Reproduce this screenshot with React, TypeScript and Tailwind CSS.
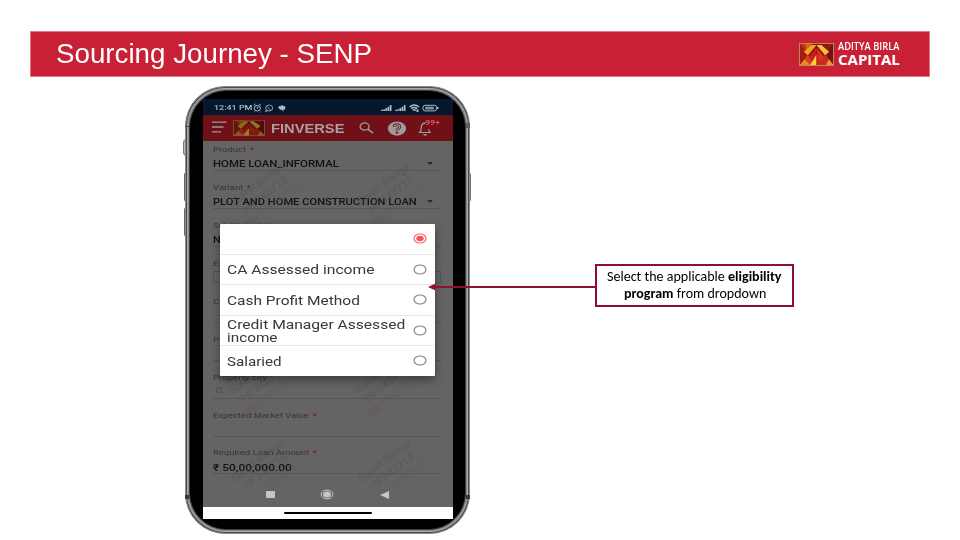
import { useLayoutEffect, useRef, useState } from "react";
import type { ReactNode } from "react";

const UI = "font-['Roboto',sans-serif]";

/* Stretches a single line of text horizontally to a given width. */
function Fit({ w, className = "", children }: { w: number; className?: string; children: ReactNode }) {
  const ref = useRef<HTMLSpanElement>(null);
  const [scale, setScale] = useState(1);
  useLayoutEffect(() => {
    if (ref.current) setScale(w / ref.current.offsetWidth);
  }, [w]);
  return (
    <span className="flex shrink-0 items-start" style={{ width: w }}>
      <span
        ref={ref}
        className={`block shrink-0 origin-left whitespace-nowrap ${className}`}
        style={{ transform: `scaleX(${scale})` }}
      >
        {children}
      </span>
    </span>
  );
}

function Emblem({ className }: { className: string }) {
  return (
    <svg viewBox="0 0 36 24" preserveAspectRatio="none" className={className}>
      <rect width="36" height="24" fill="#8e1714" />
      <path d="M0 0H16L9 11Z" fill="#b93a18" />
      <path d="M6 0H13L9 11Z" fill="#d9601d" />
      <path d="M20 0H36L27 11Z" fill="#8f1a14" />
      <path d="M0 0 9 11 0 23Z" fill="#a01f15" />
      <path d="M36 0 27 11 36 23Z" fill="#7a1010" />
      <path d="M13 0H23L18 6Z" fill="#7a1010" />
      <path d="M18 2 9 13 5 9 13 2Z" fill="#f3a324" />
      <path d="M18 2 27 13 31 9 23 2Z" fill="#f8bd36" />
      <path d="M0 24 9 12 18 24Z" fill="#d8401b" />
      <path d="M0 24 6 17 12 24Z" fill="#e98a24" />
      <path d="M36 24 27 12 18 24Z" fill="#c2301a" />
      <path d="M36 24 31 17 27 24Z" fill="#f0952a" />
      <path d="M18 5 10 15 16 22Z" fill="#c9201c" />
      <path d="M18 5 26 15 20 22Z" fill="#e0301c" />
      <path d="M18 12 11 24H18Z" fill="#fbd23e" />
      <path d="M18 12 24 24H18Z" fill="#c92a1b" />
      <rect x=".5" y=".5" width="35" height="23" fill="none" stroke="#c28a55" strokeWidth="1" />
    </svg>
  );
}

function Header() {
  return (
    <header className="ml-[30px] flex h-[46px] w-[900px] items-center justify-between border border-[#e0798a] bg-[#c82034] pl-[25px] pr-[29px]">
      <h1 className="font-['Liberation_Sans',sans-serif] text-white">
        <Fit w={316} className="text-[28px] leading-[34px]">Sourcing Journey - SENP</Fit>
      </h1>
      <div className="flex items-center gap-[4px] text-white">
        <Emblem className="h-[23px] w-[35px]" />
        <div className="pb-[2px] font-['Open_Sans',sans-serif]">
          <Fit w={61} className="text-[11px] font-semibold leading-[12px]">ADITYA BIRLA</Fit>
          <Fit w={62} className="text-[15px] font-bold leading-[14px]">CAPITAL</Fit>
        </div>
      </div>
    </header>
  );
}

function StatusBar() {
  return (
    <div className="flex h-[16px] shrink-0 items-center bg-[#03182d] pl-[11px] pr-[14px] pt-px text-[#b4bac0]">
      <Fit w={38} className={`${UI} text-[8px] font-medium leading-[10px]`}>12:41 PM</Fit>
      <svg viewBox="0 0 34 10" className="h-[10px] w-[34px]" fill="none" stroke="currentColor">
        <ellipse cx="5.3" cy="5.2" rx="3.1" ry="2.8" />
        <path d="M1.5 2.3 3.5 1M9 2.3 7 1M5.3 3.6v1.8l1.3-.8M2.8 8.5 2 9.2M7.8 8.5l.8.7" strokeWidth=".9" />
        <ellipse cx="17.2" cy="5" rx="3.5" ry="3" strokeWidth=".8" />
        <path d="m14.2 7-.8 1.5 2-.5M15.800 3.700c.3 1.500 1.200 2.300 2.800 2.700" strokeWidth=".8" />
        <path d="M27 3.200h2l1-1.200 1 1.200h2v3h-2L31.500 8 29.500 6.500H28L26.500 4.800Z" fill="currentColor" strokeWidth=".4" />
      </svg>
      <svg viewBox="0 0 58 10" className="ml-auto h-[10px] w-[58px]" fill="currentColor">
        <path d="M0 6.800h1.700V8H0zM2.200 6.300h1.700V8H2.200zM4.400 5h1.700v3H4.400zM6.600 3.700h1.700V8H6.600zM8.800 2h1.700v6H8.800z" />
        <path d="M14 6.800h1.700V8H14zM16.200 6.300h1.700V8h-1.700zM18.400 5h1.700v3h-1.700zM20.600 3.700h1.700V8h-1.700zM22.800 2h1.700v6h-1.700z" />
        <g fill="none" stroke="currentColor" strokeWidth="1.500">
          <path d="M28.500 4c3-2.400 6.500-2.400 9.500 0M30.200 5.700c2-1.500 4-1.500 6 0M31.800 7.300c1-.7 2-.7 3 0" />
        </g>
        <path d="M35.500 6.500h2V9h-2z" />
        <rect x="42" y="2.300" width="13.500" height="5.600" rx="2" fill="none" stroke="currentColor" />
        <rect x="44" y="3.700" width="9" height="2.800" rx="1" opacity=".75" />
        <rect x="56" y="4" width="1.500" height="2" />
      </svg>
    </div>
  );
}

function AppBar() {
  return (
    <div className="flex h-[26px] shrink-0 items-center bg-[#6f1117] pl-[9px] pr-[11px] text-[#a09a9a]">
      <svg viewBox="0 0 15 12" className="mb-[2px] h-[12px] w-[15px]" fill="none" stroke="currentColor" strokeWidth="1.300">
        <path d="M0 1.200h14.500M0 6h11.500M0 10.800h9" />
      </svg>
      <div className="ml-[6px] h-[16px] w-[32px] brightness-[.62]">
        <Emblem className="h-full w-full" />
      </div>
      <div className="ml-[6px] pt-[2px] text-[#a8a2a3]">
        <Fit w={74} className="font-['Liberation_Sans',sans-serif] text-[12.500px] font-bold leading-[16px]">
          FINVERSE
        </Fit>
      </div>
      <svg viewBox="0 0 15 12" className="ml-[14px] h-[12px] w-[15px]" fill="none" stroke="currentColor" strokeWidth="1.300">
        <ellipse cx="5.600" cy="4.500" rx="4.500" ry="3.700" />
        <path d="m9 7.200 5 4" strokeWidth="1.600" />
      </svg>
      <svg viewBox="0 0 20 16" className="ml-[13px] h-[15px] w-[20px]">
        <ellipse cx="10" cy="8" rx="9.700" ry="7.600" fill="#a09a9b" />
        <path d="M6.800 6.200C7 3.200 13 3.200 13 6.200c0 1.800-3 1.800-3 3.800" fill="none" stroke="#751a1f" strokeWidth="3" />
        <path d="M6.800 6.200C7 3.200 13 3.200 13 6.200c0 1.800-3 1.800-3 3.800" fill="none" stroke="#a09a9b" strokeWidth="1.200" />
        <ellipse cx="10" cy="12.400" rx="1.500" ry="1.100" fill="#751a1f" />
      </svg>
      <div className="relative ml-[10px] h-[16px] w-[17px]">
        <svg viewBox="0 0 16 16" className="h-full w-full" fill="none" stroke="currentColor" strokeWidth="1.200">
          <path d="M1 12.500h12.500M2.500 12.300C4 10.500 3.600 8 4 6c.5-2 2-3 4-3.200M12.500 12.300c-1.200-1-1.200-2.500-1.300-4M6 14.300c1 .9 2.200.9 3.200 0" />
        </svg>
        <div className="absolute -top-[2px] left-[9px] h-[12px] w-[12px] rounded-full bg-[#82070f]" />
        <div className="absolute -top-px left-[8px]">
          <Fit w={14.5} className={`${UI} text-[7.500px] italic leading-[8px] text-[#bd9597]`}>99+</Fit>
        </div>
      </div>
    </div>
  );
}

type FieldData = { label: string; w: number; req?: boolean; value?: string; vw?: number; select?: boolean; search?: boolean; box?: boolean };

const fields: FieldData[] = [
  { label: "Product", w: 33, req: true, value: "HOME LOAN_INFORMAL", vw: 126, select: true },
  { label: "Variant", w: 30, req: true, value: "PLOT AND HOME CONSTRUCTION LOAN", vw: 204, select: true },
  { label: "Sub Variant", w: 48, req: true, value: "NA", vw: 15 },
  { label: "Eligibility Program", w: 80, req: true, box: true },
  { label: "Construction Type", w: 80 },
  { label: "Property Type", w: 60 },
  { label: "Property city", w: 54, search: true },
  { label: "Expected Market Value", w: 96, req: true },
  { label: "Required Loan Amount", w: 96, req: true, value: "₹ 50,00,000.00", vw: 79 },
];

function Field({ f }: { f: FieldData }) {
  return (
    <div className={`flex h-[37.950px] shrink-0 flex-col justify-end border-b ${f.box ? "border-transparent" : "border-[#565656]"}`}>
      <div className="flex h-[14px] items-center gap-[4px]">
        <Fit w={f.w} className={`${UI} text-[8px] leading-[10px] text-[#353535]`}>{f.label}</Fit>
        {f.req && <span className={`${UI} text-[8px] font-bold leading-[10px] text-[#8b1519]`}>*</span>}
      </div>
      {f.box ? (
        <div className="mb-px h-[12px] border border-[#41566d]" />
      ) : (
        <div className="flex h-[13px] items-center justify-between pt-px">
          {f.value && <Fit w={f.vw ?? 0} className={`${UI} text-[9.500px] font-medium leading-[11px] text-[#121212]`}>{f.value}</Fit>}
          {f.select && <span className="mr-[8px] h-0 w-0 border-x-[3px] border-t-[3px] border-x-transparent border-t-[#292929]" />}
          {f.search && (
            <svg viewBox="0 0 10 9" className="mb-[2px] ml-[2px] h-[8px] w-[10px]" fill="none" stroke="#4a4a4a">
              <ellipse cx="4" cy="3.500" rx="3.300" ry="2.700" />
              <path d="m6.500 5.500 3 2.500" />
            </svg>
          )}
        </div>
      )}
    </div>
  );
}

const marks = [
  "left-[29px] top-[76px]",
  "left-[155px] top-[76px]",
  "left-[27px] top-[265px]",
  "left-[151px] top-[265px]",
  "left-[29px] top-[353px]",
  "left-[156px] top-[353px]",
];

function Watermarks() {
  return (
    <div className="pointer-events-none absolute left-0 top-0 h-[386px] w-full overflow-hidden">
      {marks.map((m) => (
        <div
          key={m}
          className={`absolute ${m} ${UI} flex w-[66px] -rotate-[37deg] flex-col items-center text-[10.500px] leading-[13px] text-[#474e5a]/45`}
        >
          <Fit w={62}>Sumit Banga</Fit>
          <Fit w={53}>HF343718</Fit>
          <div className="flex items-center gap-1 text-[#6b5350]/35">
            <span className="h-[8px] w-[14px] bg-[#6b4a46]/15" />
            <Fit w={50}>FINVERSE</Fit>
          </div>
        </div>
      ))}
    </div>
  );
}

function Radio({ on }: { on?: boolean }) {
  return (
    <svg viewBox="0 0 14 11" className="h-[11px] w-[14px] shrink-0" fill="none">
      <ellipse cx="7" cy="5.500" rx="6" ry="4.500" stroke={on ? "#f4666b" : "#858585"} strokeWidth="1.200" />
      {on && <ellipse cx="7" cy="5.500" rx="3.700" ry="2.800" fill="#f4555c" />}
    </svg>
  );
}

const options: { lines: [string, number][]; on?: boolean }[] = [
  { lines: [], on: true },
  { lines: [["CA Assessed income", 147]] },
  { lines: [["Cash Profit Method", 133]] },
  { lines: [["Credit Manager Assessed", 178], ["income", 51]] },
  { lines: [["Salaried", 55]] },
];

function OptionsModal() {
  return (
    <div className="absolute left-[16.500px] top-[125px] flex h-[151.500px] w-[215.500px] flex-col divide-y divide-[#e9e9e9] rounded-[1px] bg-white shadow-[0_4px_10px_rgba(0,0,0,.4)]">
      {options.map((o, i) => (
        <div key={i} className="flex min-h-0 flex-1 items-center justify-between pl-[7.500px] pr-[8px]">
          <div className="pt-px">
            {o.lines.map(([t, w]) => (
              <Fit key={t} w={w} className={`${UI} text-[13.500px] leading-[13px] text-[#383838]`}>{t}</Fit>
            ))}
          </div>
          <Radio on={o.on} />
        </div>
      ))}
    </div>
  );
}

function AndroidNav() {
  return (
    <div className="mt-[15px] flex h-[11px] items-center justify-between pl-[62.500px] pr-[64px] text-[#c6c6c6]">
      <span className="h-[7px] w-[9px] rounded-[1px] bg-current" />
      <svg viewBox="0 0 14 11" className="h-[11px] w-[14px]">
        <ellipse cx="7" cy="5.500" rx="5.900" ry="4.400" fill="none" stroke="currentColor" />
        <ellipse cx="7" cy="5.500" rx="4" ry="2.900" fill="currentColor" />
      </svg>
      <svg viewBox="0 0 9 8" className="h-[8px] w-[9px]" fill="currentColor">
        <path d="M0 4 9 0v8Z" />
      </svg>
    </div>
  );
}

function Phone() {
  return (
    <div className="relative h-[448px] w-[285px]">
      <div className="absolute -left-[2px] top-[53px] h-[17px] w-[4px] rounded-l-sm border border-[#777] bg-[#bbb]" />
      <div className="absolute -left-[1px] top-[86px] h-[30px] w-[3px] rounded-l-sm border border-[#666] bg-[#bbb]" />
      <div className="absolute -left-[1px] top-[121px] h-[30px] w-[3px] rounded-l-sm border border-[#666] bg-[#bbb]" />
      <div className="absolute -right-[1px] top-[86px] h-[30px] w-[3px] rounded-r-sm bg-[#77747b]" />
      <div className="relative h-full w-full rounded-[40px] border border-[#8b8b8e] bg-[#4b4b4e] p-px">
        <div className="h-full w-full rounded-[38px] border border-[#aaaaac] bg-[#8a8a8d] p-px">
          <div className="h-full w-full rounded-[37px] border border-[#3c3c3e] bg-black pl-[13px] pt-[8px]">
            <div className="relative flex h-[420px] w-[250px] flex-col overflow-hidden rounded-t-[3px] bg-[#646464]">
              <StatusBar />
              <AppBar />
              <div className="-mt-[8px] flex flex-col pl-[10px] pr-[12px]">
                {fields.map((f) => (
                  <Field key={f.label} f={f} />
                ))}
              </div>
              <AndroidNav />
              <div className="mt-auto flex h-[12px] items-center justify-center bg-white">
                <span className="h-[2.500px] w-[88px] rounded-full bg-black" />
              </div>
              <Watermarks />
              <OptionsModal />
            </div>
          </div>
        </div>
      </div>
      <div className="absolute left-0 top-[40px] h-px w-[5px] bg-[#4a4a4a]" />
      <div className="absolute right-0 top-[37px] h-[5px] w-[4px] bg-[#5e5e61]" />
      <div className="absolute left-0 top-[409px] h-[4px] w-[4px] bg-[#38383a]" />
      <div className="absolute right-0 top-[409px] h-[4px] w-[4px] bg-[#38383a]" />
    </div>
  );
}

function Callout() {
  return (
    <div className="relative ml-[125px] mt-[178px] flex h-[43px] w-[199px] flex-col items-center justify-center border-2 border-[#900f2c] bg-white pb-[2px] font-['Carlito','Lato',sans-serif] text-black">
      <svg viewBox="0 0 168 10" className="absolute -left-[169px] top-[16px] h-[10px] w-[168px]">
        <path d="M5 5h163" stroke="#900f2c" strokeWidth="2" />
        <path d="M0 5 7 1.700v6.600Z" fill="#900f2c" />
      </svg>
      <Fit w={175} className="text-[13.330px] leading-[17px]">
        Select the applicable <b>eligibility</b>
      </Fit>
      <Fit w={142} className="text-[13.330px] leading-[17px]">
        <b>program</b> from dropdown
      </Fit>
    </div>
  );
}

export default function App() {
  return (
    <div className="flex h-[540px] w-[960px] flex-col overflow-hidden bg-white pt-[31px]">
      <Header />
      <main className="flex items-start pl-[185px] pt-[9px]">
        <Phone />
        <Callout />
      </main>
    </div>
  );
}
